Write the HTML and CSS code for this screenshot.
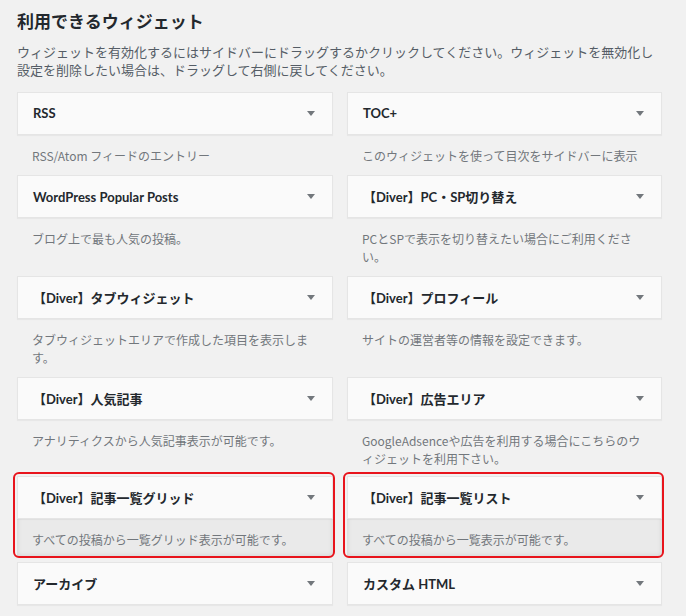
FILE: index.html
```html
<!DOCTYPE html>
<html lang="ja">
<head>
    <meta charset="UTF-8">
    <meta name="viewport" content="width=device-width, initial-scale=1.0">
    <title>ウィジェット</title>
    <link rel="stylesheet" href="styles.css">
</head>
<body>
    <section class="widgets">
        <h2 class="widgets-title">利用できるウィジェット</h2>
        <p class="widgets-intro">ウィジェットを有効化するにはサイドバーにドラッグするかクリックしてください。ウィジェットを無効化し設定を削除したい場合は、ドラッグして右側に戻してください。</p>

        <div class="widget-list">
            <div class="widget">
                <div class="widget-top"><span class="widget-name">RSS</span><span class="arrow"></span></div>
                <div class="widget-desc">RSS/Atom フィードのエントリー</div>
            </div>
            <div class="widget">
                <div class="widget-top"><span class="widget-name">TOC+</span><span class="arrow"></span></div>
                <div class="widget-desc">このウィジェットを使って目次をサイドバーに表示</div>
            </div>

            <div class="widget">
                <div class="widget-top"><span class="widget-name">WordPress Popular Posts</span><span class="arrow"></span></div>
                <div class="widget-desc">ブログ上で最も人気の投稿。</div>
            </div>
            <div class="widget">
                <div class="widget-top"><span class="widget-name">【Diver】PC・SP切り替え</span><span class="arrow"></span></div>
                <div class="widget-desc">PCとSPで表示を切り替えたい場合にご利用ください。</div>
            </div>

            <div class="widget">
                <div class="widget-top"><span class="widget-name">【Diver】タブウィジェット</span><span class="arrow"></span></div>
                <div class="widget-desc">タブウィジェットエリアで作成した項目を表示します。</div>
            </div>
            <div class="widget">
                <div class="widget-top"><span class="widget-name">【Diver】プロフィール</span><span class="arrow"></span></div>
                <div class="widget-desc">サイトの運営者等の情報を設定できます。</div>
            </div>

            <div class="widget">
                <div class="widget-top"><span class="widget-name">【Diver】人気記事</span><span class="arrow"></span></div>
                <div class="widget-desc">アナリティクスから人気記事表示が可能です。</div>
            </div>
            <div class="widget">
                <div class="widget-top"><span class="widget-name">【Diver】広告エリア</span><span class="arrow"></span></div>
                <div class="widget-desc">GoogleAdsenceや広告を利用する場合にこちらのウィジェットを利用下さい。</div>
            </div>

            <!-- highlighted ones -->
            <div class="widget marked">
                <div class="widget-top"><span class="widget-name">【Diver】記事一覧グリッド</span><span class="arrow"></span></div>
                <div class="widget-desc">すべての投稿から一覧グリッド表示が可能です。</div>
            </div>
            <div class="widget marked">
                <div class="widget-top"><span class="widget-name">【Diver】記事一覧リスト</span><span class="arrow"></span></div>
                <div class="widget-desc">すべての投稿から一覧表示が可能です。</div>
            </div>

            <div class="widget">
                <div class="widget-top"><span class="widget-name">アーカイブ</span><span class="arrow"></span></div>
                <div class="widget-desc">サイトの投稿の月別アーカイブ。</div>
            </div>
            <div class="widget">
                <div class="widget-top"><span class="widget-name">カスタム HTML</span><span class="arrow"></span></div>
                <div class="widget-desc">任意の HTML コード。</div>
            </div>
        </div>
    </section>
</body>
</html>
```

FILE: styles.css
```css
body{
    margin: 0;
    background-color: #f1f1f1;
    font-family: "Noto Sans CJK JP", "Noto Sans", sans-serif;
    color: #23282d;
    overflow: hidden;
}
.widgets{
    padding: 9px 0 0 17px;
}
.widgets-title{
    margin: 0;
    font-size: 17px;
    line-height: 24px;
    font-weight: 700;
    color: #23282d;
}
.widgets-intro{
    margin: 10px 0 12px;
    max-width: 642px;
    font-size: 13px;
    line-height: 18.4px;
    color: #555d66;
}
.widget-list{
    display: grid;
    grid-template-columns: 316px 315px;
    column-gap: 14px;
}
.widget{
    position: relative;
}
.widget-top{
    display: flex;
    align-items: center;
    justify-content: space-between;
    height: 41px;
    padding: 0 17px 0 15px;
    background-color: #fafafa;
    border: 1px solid #e5e5e5;
    box-shadow: 0 1px 1px rgba(0, 0, 0, 0.04);
}
.widget-name{
    font-family: Lato, "Noto Sans CJK JP", sans-serif;
    font-size: 13px;
    font-weight: 700;
    color: #23282d;
}
.arrow{
    width: 0;
    height: 0;
    border-left: 4px solid transparent;
    border-right: 4px solid transparent;
    border-top: 5px solid #72777c;
}
.widget-desc{
    padding: 12px 21px 11px 15px;
    font-size: 12px;
    line-height: 17.5px;
    color: #72777c;
}
/* the two boxed in red */
.widget.marked{
    align-self: start;
    transform: translateY(-2px);
    background-color: #eaeaea;
    box-shadow: inset 0 0 5px rgba(0, 0, 0, 0.12);
    margin-bottom: 4px;
}
.widget.marked .widget-desc{
    padding-bottom: 7px;
}
.widget.marked::after{
    content: "";
    position: absolute;
    top: -4px;
    left: -4px;
    right: -2px;
    bottom: -2px;
    border: 2px solid #e8141c;
    border-radius: 6px;
}
```
